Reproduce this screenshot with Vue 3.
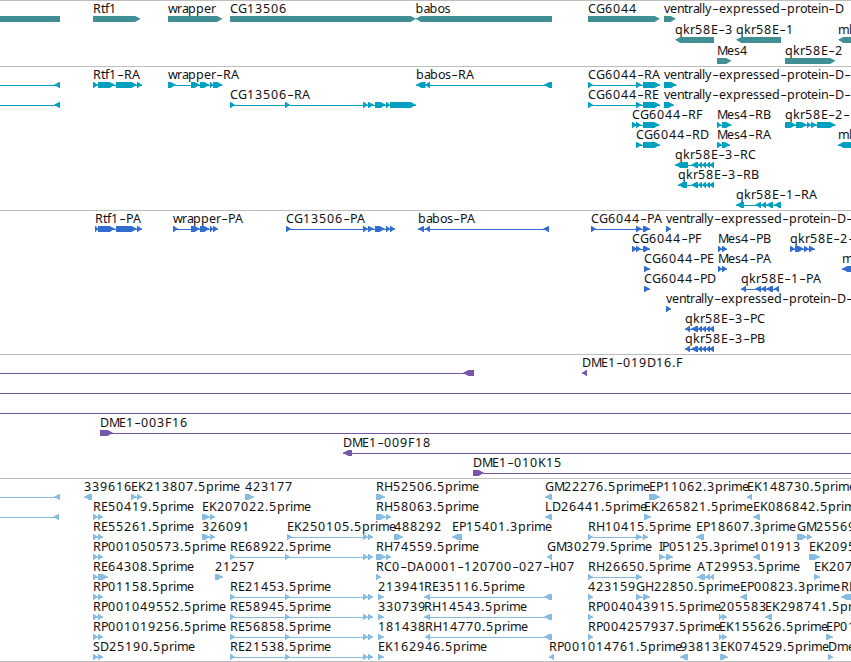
<script setup>
// Horizontal advance of every character, on a whole-pixel grid
const groups = { 3: 'Iil', 4: 't.f', 5: 'r', 6: 'asv', 7: 'EPFLSTeonxyk-', 8: 'RCKTbdpq0123456789', 9: 'GDAHw', 10: 'M', 11: 'm' }
const advance = {}
for (const [w, chars] of Object.entries(groups)) for (const c of chars) advance[c] = Number(w)

// Splits a label into runs; hyphens form their own run so they can be drawn wider
function runs(x, text) {
  let pen = x
  return text.split(/(-)/).filter(Boolean).map((part) => {
    const xs = [...part].map((c) => {
      const at = pen
      pen += advance[c] ?? 8
      return at.toFixed(1)
    })
    return { part, hyphen: part === '-', xs: xs.join(' ') }
  })
}

// Feature: [label, start, direction, segments, connector range]
const f = (label, dir, segs, line) => {
  const range = line ?? [segs[0][0], segs[segs.length - 1][1]]
  return { label, dir, segs, line: range, x: segs.length ? segs[0][0] : range[0] }
}
const R = (label, ...segs) => f(label, 1, segs)
const L = (label, ...segs) => f(label, -1, segs)

function shape([a, b], dir) {
  const h = Math.min(6, b - a)
  if (dir === 0) return `M${a} 0H${b}V6H${a}Z`
  return dir > 0
    ? `M${a} 0H${b - h + 0.7}L${b} 2.8L${b - h + 0.7} 6H${a}Z`
    : `M${b} 0H${a + h - 0.7}L${a} 2.8L${a + h - 0.7} 6H${b}Z`
}

const ve = 'ventrally-expressed-protein-D'
const rtf = [[98, 115], [116, 137], [137, 142]]
const qkr3 = [[691, 698], [698, 702], [702, 706], [706, 710], [709, 714]]
const qkr1 = [[755, 761], [761, 766], [766, 773]]
const edge = (end) => f('', -1, [[end - 6, end]], [0, end])
const pair = (label) => R(label, [93, 98], [98, 103])
const clone = (label) => R(label, [230, 235], [285, 290], [363, 368], [368, 373])

const tracks = [
  { name: 'gene', pitch: 21, height: 66, rows: [
    [f('', 0, [[0, 60]]), R('Rtf1', [93, 140.5]), R('wrapper', [168, 222.5]), R('CG13506', [230, 416]), L('babos', [415.5, 552]), R('CG6044', [588, 660]), R(ve, [664, 676])],
    [L('qkr58E-3', [675, 714]), L('qkr58E-1', [736, 781]), L('ml', [838, 860])],
    [R('Mes4', [717, 731.5]), R('qkr58E-2', [785, 835.5])],
  ] },
  { name: 'transcript', pitch: 20, height: 144, rows: [
    [edge(60), R('Rtf1-RA', [93, 98], ...rtf), R('wrapper-RA', [168, 176], [191, 200], [200, 209.5], [210, 213], [213, 222.5]), L('babos-RA', [416, 425.5], [425, 430], [544, 552]), R('CG6044-RA', [588, 593], [636, 642], [643, 660]), R(ve + '-', [664, 676.5])],
    [edge(60), R('CG13506-RA', [230, 235], [285, 290], [363, 368], [368, 374], [375, 386], [386, 390], [390, 416]), R('CG6044-RE', [588, 593], [636, 642], [643, 660]), R(ve + '-', [664, 674])],
    [R('CG6044-RF', [632, 637], [636, 641], [643, 659.5]), R('Mes4-RB', [717, 721], [722, 731.5]), R('qkr58E-2-', [785, 796], [796, 807], [807, 811], [811, 817], [817, 835.5])],
    [R('CG6044-RD', [636, 642], [643, 660]), R('Mes4-RA', [717, 722], [722, 730]), L('ml', [838, 860])],
    [L('qkr58E-3-RC', [675, 688], ...qkr3)],
    [L('qkr58E-3-RB', [678, 687], ...qkr3)],
    [L('qkr58E-1-RA', [736, 744], ...qkr1, [774, 781])],
  ] },
  { name: 'protein', pitch: 20, height: 144, rows: [
    [R('Rtf1-PA', [95, 98], ...rtf), R('wrapper-PA', [173, 178], [191, 200], [200, 209.5], [210, 213], [213, 218]), R('CG13506-PA', [286, 291], [363, 368], [368, 374], [375, 385], [386, 390], [390, 395]), L('babos-PA', [418, 424], [425, 430], [543, 549]), R('CG6044-PA', [591, 596], [636, 642], [643, 650]), R(ve + '-', [666, 671])],
    [R('CG6044-PF', [632, 637], [636, 641], [643, 650]), R('Mes4-PB', [718, 722], [722, 727]), R('qkr58E-2-', [790, 795], [795, 804], [804, 809], [809, 815])],
    [R('CG6044-PE', [644, 650]), R('Mes4-PA', [718, 722], [722, 727]), L('ml', [842, 860])],
    [R('CG6044-PD', [644, 650]), L('qkr58E-1-PA', [741, 746], ...qkr1, [774, 779])],
    [R(ve + '-', [666, 671])],
    [L('qkr58E-3-PC', [685, 690], ...qkr3)],
    [L('qkr58E-3-PB', [685, 690], ...qkr3)],
  ] },
  { name: 'clone', pitch: 20, height: 124, rows: [
    [f('', -1, [[463, 474]], [0, 474]), L('DME1-019D16.F', [582, 587])],
    [f('', 1, [], [0, 851])],
    [f('', 1, [], [0, 851])],
    [f('DME1-003F16', 1, [[100, 113]], [100, 851])],
    [f('DME1-009F18', -1, [[343, 352]], [343, 851])],
    [f('DME1-010K15', 1, [[473, 484]], [473, 851])],
  ] },
  { name: 'est', pitch: 20, height: 184, rows: [
    [edge(60), L('339616', [84, 92]), R('EK213807.5prime', [131, 137], [137, 142]), R('423177', [245, 254]), R('RH52506.5prime', [376, 385]), L('GM22276.5prime', [545, 552]), R('EP11062.3prime', [649, 660]), L('EK148730.5prime', [747, 752])],
    [edge(59), pair('RE50419.5prime'), R('EK207022.5prime', [202, 210], [210, 215]), R('RH58063.5prime', [376, 386], [386, 391]), L('LD26441.5prime', [545, 552]), R('EK265821.5prime', [644, 651]), L('EK086842.5prime', [753, 760])],
    [pair('RE55261.5prime'), R('326091', [202, 210], [210, 215]), R('EK250105.5prime', [287, 292], [363, 368], [368, 373]), R('488292', [394, 403]), L('EP15401.3prime', [452, 462]), R('RH10415.5prime', [588, 593], [636, 642], [643, 648]), L('EP18607.3prime', [696, 704]), R('GM25569', [797, 807], [807, 812])],
    [pair('RP001050573.5prime'), clone('RE68922.5prime'), R('RH74559.5prime', [376, 386], [386, 391]), L('GM30279.5prime', [547, 552]), R('IP05125.3prime', [659, 665], [666, 673]), L('101913', [753, 760]), R('EK2095', [809, 820])],
    [R('RE64308.5prime', [93, 98], [98, 108]), R('21257', [215, 223]), R('RC0-DA0001-120700-027-H07', [376, 381]), R('RH26650.5prime', [588, 593], [636, 642]), L('AT29953.5prime', [697, 705], [705, 710], [710, 714]), R('EK207', [814, 820])],
    [pair('RP01158.5prime'), clone('RE21453.5prime'), R('213941', [378, 384]), L('RE35116.5prime', [424, 430], [544, 552]), R('423159', [588, 593]), R('GH22850.5prime', [636, 642], [643, 650]), L('EP00823.3prime', [740, 747]), L('RE', [841, 860])],
    [pair('RP001049552.5prime'), clone('RE58945.5prime'), R('330739', [378, 384]), L('RH14543.5prime', [424, 430], [544, 552]), R('RP004043915.5prime', [588, 593]), R('205583', [719, 722], [722, 727]), L('EK298741.5prime', [765, 772])],
    [pair('RP001019256.5prime'), clone('RE56858.5prime'), R('181438', [378, 384]), L('RH14770.5prime', [425, 430], [544, 552]), R('RP004257937.5prime', [588, 593]), R('EK155626.5prime', [719, 722], [722, 727]), R('EP01', [826, 833])],
    [pair('SD25190.5prime'), clone('RE21538.5prime'), R('EK162946.5prime', [378, 384]), L('RP001014761.5prime', [549, 554]), L('93813', [680, 688]), R('EK074529.5prime', [720, 728]), R('Dme', [828, 833])],
  ] },
]
</script>

<template>
  <main class="browser">
    <section v-for="t in tracks" :key="t.name" class="track" :class="t.name">
      <svg width="851" :height="t.height" :viewBox="`0 0 851 ${t.height}`">
        <g v-for="(row, r) in t.rows" :key="r" :transform="`translate(0 ${r * t.pitch})`">
          <g v-for="(item, i) in row" :key="i">
            <rect v-if="t.name !== 'gene'" class="ink" :x="item.line[0]" y="19" :width="item.line[1] - item.line[0]" height="1" />
            <path v-for="(s, k) in item.segs" :key="k" class="ink" transform="translate(0 16)" :d="shape(s, item.dir)" />
            <text v-if="item.label" y="13"><tspan v-for="(run, k) in runs(item.x, item.label)" :key="k" :x="run.xs" :y="run.hyphen ? 14 : 13" :class="{ hyphen: run.hyphen }">{{ run.part }}</tspan></text>
          </g>
        </g>
        <rect class="rule" x="0" y="0" width="851" height="1" />
        <rect v-if="t.name === 'est'" class="rule" x="0" y="183" width="851" height="1" />
      </svg>
    </section>
  </main>
</template>

<style>
body {
  background: #fff;
}
</style>

<style scoped>
.browser {
  display: flex;
  flex-direction: column;
  width: 851px;
  height: 662px;
  overflow: hidden;
}
.track,
.track svg {
  display: block;
  flex: none;
}
.track text {
  font: 12.5px "Noto Sans", "Open Sans", sans-serif;
  fill: #111;
}
.track .hyphen {
  font: 300 16px Inter, sans-serif;
}
.ink {
  fill: var(--ink);
}
.rule {
  fill: #bebebe;
}
.gene {
  --ink: #418e94;
}
.transcript {
  --ink: #00a0c0;
}
.protein {
  --ink: #316ccf;
}
.clone {
  --ink: #7656a8;
}
.est {
  --ink: #86bcdf;
}
</style>
